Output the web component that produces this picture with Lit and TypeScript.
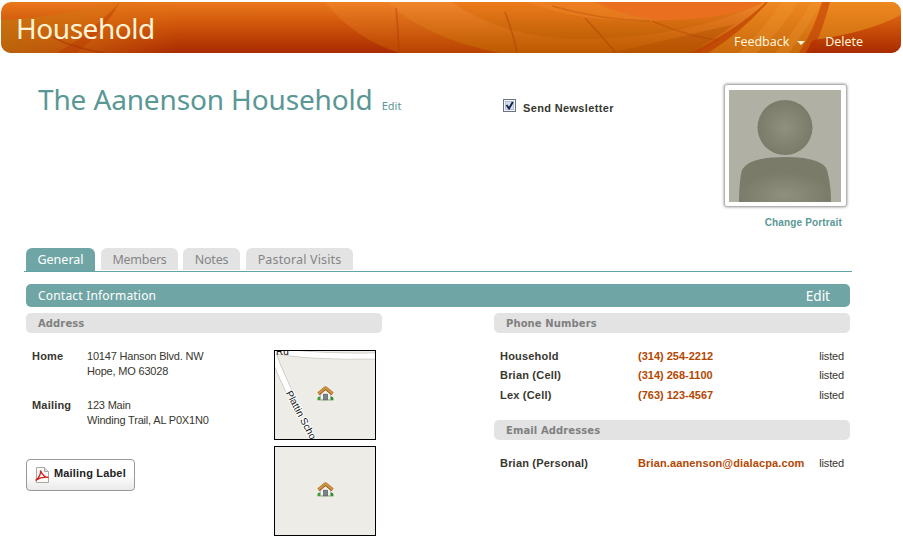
import { LitElement, html, css, svg } from "lit";
import { customElement } from "lit/decorators.js";

const house = svg`<g transform="translate(42,34.500)">
  <path d="M.5 13.300h16v1.500h-16z" fill="#55a044"/>
  <circle cx="2.300" cy="12.800" r="1.700" fill="#3f9b3a"/><circle cx="14.400" cy="12.800" r="1.900" fill="#2f8c34"/>
  <path d="M3.500 7.500 8.500 3.500l5 4v6.800h-10z" fill="#f4f1ea" stroke="#a8a39b" stroke-width=".6"/>
  <rect x="6.600" y="8.700" width="4" height="5.600" fill="#77838a" stroke="#555f66" stroke-width=".7"/>
  <path d="M1.500 8.300 8.500 2.500l7 5.800" fill="none" stroke="#8c5516" stroke-width="3.500" stroke-linejoin="round"/>
  <path d="M1.500 8 8.500 2.200 15.500 8" fill="none" stroke="#cf9440" stroke-width="2.300" stroke-linejoin="round"/>
</g>`;

@customElement("app-root")
export class AppRoot extends LitElement {
  static styles = css`
    :host { display: block; width: 903px; height: 543px; overflow: hidden; background: #fff; color: #37372f; font: 11px/14px "Liberation Sans", Arial, sans-serif; }
    * { box-sizing: border-box; }
    span, a, b, h1, h2, h3 { white-space: nowrap; }
    h1, h2, h3 { margin: 0; font-weight: 400; }
    .banner { position: relative; margin: 2px 2px 0 1px; height: 51px; border-radius: 10px; overflow: hidden; color: #fff3d6; display: flex; justify-content: space-between; font-family: "Noto Sans", sans-serif; }
    .art { position: absolute; left: 0; top: 0; }
    .banner h1 { position: relative; padding-left: 15px; font-size: 28px; line-height: 52px; letter-spacing: -0.45px; }
    .menu { position: relative; display: flex; align-items: center; margin: 30px 38px 0 0; height: 20px; font-size: 12.5px; letter-spacing: -.05px; }
    .arrow { width: 0; height: 0; border: 4px solid transparent; border-top-color: #fff3d6; border-bottom: 0; margin: 1px 20px 0 8px; }
    .top { display: grid; grid-template-columns: 465px 221px 1fr; height: 195px; padding-left: 38px; }
    .title { display: flex; align-items: baseline; color: #5a9795; font-family: "Noto Sans", sans-serif; padding-top: 26px; }
    .title h2 { font-size: 28px; line-height: 40px; letter-spacing: -0.14px; }
    .title a { font-size: 11px; margin-left: 9px; }
    .news { display: flex; padding-top: 46px; font-weight: 700; }
    .box { margin-right: 7px; }
    .news span { padding-top: 2px; letter-spacing: .35px; }
    .frame { width: 121px; height: 121px; margin: 32px 0 0 1px; padding: 5px 5px 4px 4px; background: #fff; border-radius: 2px; box-shadow: 0 0 3px 1px #888; }
    .frame svg { display: block; }
    .change { display: block; width: 118px; text-align: right; color: #5a9795; font-weight: 700; font-size: 10px; margin-top: 10px; letter-spacing: .15px; }
    .tabs { display: flex; margin: 0 51px 0 24px; padding-left: 2px; height: 24px; border-bottom: 1px solid #5fa5a8; font: 12.5px/23px "Noto Sans", sans-serif; color: #858585; }
    .tab { height: 22px; border-radius: 6px 6px 0 0; background: #e3e3e3; text-align: center; }
    .on { height: 23px; background: #6fa5a5; color: #fff; }
    .w0 { width: 69px; margin-right: 6px; } .w1 { width: 77px; margin-right: 5px; letter-spacing: -.25px; } .w2 { width: 57px; margin-right: 6px; letter-spacing: -.2px; } .w3 { width: 107px; letter-spacing: .15px; }
    .bar { display: flex; justify-content: space-between; margin: 12px 53px 6px 26px; padding: 0 20px 0 12px; height: 23px; border-radius: 5px; background: #6fa5a5; color: #fff; font: 12px/23px "Noto Sans", sans-serif; }
    .bar span { letter-spacing: .2px; }
    .bar a { font-size: 13.5px; line-height: 24px; }
    .cols { display: grid; grid-template-columns: 356px 356px; column-gap: 112px; padding-left: 26px; }
    h3 { height: 20px; border-radius: 5px; background: #e3e3e3; color: #808080; font: 700 10px/21px "DejaVu Sans", Verdana, sans-serif; padding-left: 12px; letter-spacing: .1px; }
    .address { display: flex; justify-content: space-between; padding: 17px 6px 0; }
    .places { display: grid; grid-template-columns: 55px auto; grid-template-rows: 49px 61px 32px; margin-top: -1px; }
    .places p { margin: 0; line-height: 14.5px; white-space: nowrap; letter-spacing: -.19px; }
    .places b, .phones b { font-size: 11px; line-height: 14px; letter-spacing: .2px; }
    .btn { grid-column: 1 / 3; display: flex; align-items: center; width: 109px; height: 32px; margin-left: -6px; padding: 0 0 4px 8px; border: 1px solid #999; border-radius: 4px; background: linear-gradient(#fff 50%, #e9e9e9); color: #222; font: 700 11px "Liberation Sans", sans-serif; letter-spacing: .17px; }
    .btn svg { margin: 4px 4px 0 -1px; flex: none; }
    .maps { display: flex; flex-direction: column; gap: 6px; }
    .map { width: 102px; height: 90px; border: 1px solid #000; background: #edece6; }
    .map svg { display: block; }
    .phones { display: grid; grid-template-columns: 138px 1fr auto; padding: 13px 6px 0; grid-auto-rows: 19.5px; align-items: center; }
    .three { height: 87px; }
    .phones a { color: #b34700; font-weight: 700; }
    .phones .mail { letter-spacing: .13px; }
    .phones span { letter-spacing: -.15px; }
  `;

  private row(name: string, value: string) {
    return html`<b>${name}</b><a class=${value.includes("@") ? "mail" : "tel"}>${value}</a><span>listed</span>`;
  }

  render() {
    return html`
      <header class="banner">
        <svg class="art" width="900" height="51" viewBox="1 2 900 51">
          <defs>
            <linearGradient id="a" gradientUnits="userSpaceOnUse" x1="0" y1="2" x2="0" y2="53"><stop stop-color="#ea781c"/><stop offset=".4" stop-color="#d2590b"/><stop offset="1" stop-color="#a82a00"/></linearGradient>
            <linearGradient id="b" gradientUnits="userSpaceOnUse" x1="0" y1="2" x2="0" y2="53"><stop stop-color="#ee8024"/><stop offset="1" stop-color="#b84200"/></linearGradient>
            <linearGradient id="c" gradientUnits="userSpaceOnUse" x1="0" y1="2" x2="0" y2="53"><stop stop-color="#f0852c"/><stop offset="1" stop-color="#bd5900"/></linearGradient>
            <linearGradient id="d" gradientUnits="userSpaceOnUse" x1="0" y1="2" x2="0" y2="42"><stop stop-color="#ec7b1c"/><stop offset="1" stop-color="#bd5e04"/></linearGradient>
            <linearGradient id="e" gradientUnits="userSpaceOnUse" x1="0" y1="2" x2="0" y2="53"><stop stop-color="#ee8820"/><stop offset="1" stop-color="#c96a0c"/></linearGradient>
            <linearGradient id="l"><stop stop-color="#c07a10" stop-opacity=".7"/><stop offset=".45" stop-color="#d47812" stop-opacity=".5"/><stop offset="1" stop-color="#e07010" stop-opacity="0"/></linearGradient>
          </defs>
          <path d="M0 0h903v54H0z" fill="url(#a)"/>
          <path d="M0 20Q60 18 112 2h68v51H0z" fill="url(#l)"/>
          <path d="M53 37Q70 47 105 53" fill="none" stroke="#a83000" stroke-width="1.500" opacity=".5"/>
          <path d="M57 53 82 37Q103 20 120 2Q106 28 77 53z" fill="#b52f00" opacity=".35"/>
          <path d="M325 2Q354 38 399 53H765V2z" fill="url(#b)"/>
          <path d="M388 2Q425 38 500 53H790V2z" fill="url(#c)"/>
          <path d="M451 2Q505 39 583 39Q690 38 765 2z" fill="url(#d)"/>
          <path d="M545 8Q580 20 640 21Q710 20 765 2H525Q535 5 545 8z" fill="#ed8326" opacity=".5"/>
          <path d="M595 2Q630 20 670 20Q725 19 765 2z" fill="#ea701f"/>
          <path d="M610 53Q680 37 735 24L692 53z" fill="#a94800" opacity=".35"/>
          <path d="M399 53Q398 27 396 8M517 53Q514 36 505 12M616 53Q600 34 585 18" fill="none" stroke="#a83a00" stroke-width="1.700" opacity=".4"/>
          <path d="M552 6Q600 20 650 21M652 21Q690 38 730 42H820" fill="none" stroke="#a83a00" stroke-width="1.500" opacity=".3"/>
          <path d="M762 2H901V15Q870 32 814 40L806 53H698Q742 28 762 2z" fill="url(#e)"/>
          <path d="M782 2h16Q782 30 756 53h-18Q765 28 782 2zM811 2h11Q806 30 789 53h-14Q798 27 811 2z" fill="#f5a441" opacity=".22"/>
          <path d="M766 2Q739 28 691 53h17Q743 31 768 2z" fill="#b93600" opacity=".6"/>
          <path d="M901 15Q870 32 812 41L806 53h95z" fill="url(#a)"/>
          <path d="M822 2h8Q822 32 812 53H799Q814 30 822 2z" fill="#b93000" opacity=".5"/>
        </svg>
        <h1>Household</h1>
        <nav class="menu"><span>Feedback</span><i class="arrow"></i><span>Delete</span></nav>
      </header>
      <section class="top">
        <div class="title"><h2>The Aanenson Household</h2><a>Edit</a></div>
        <div class="news">
          <svg class="box" width="13" height="13"><rect x=".5" y=".5" width="12" height="12" fill="#f4f5f8" stroke="#6b7385"/><rect x="2.500" y="2.500" width="8" height="8" fill="#d3dcec" stroke="#b5bfd0"/><path d="M3.500 6 6 9.500 9.800 3" fill="none" stroke="#15244f" stroke-width="1.900"/></svg>
          <span>Send Newsletter</span>
        </div>
        <div>
          <div class="frame"><svg width="112" height="112">
            <defs><radialGradient id="h"><stop stop-color="#8f907e"/><stop offset="1" stop-color="#7a7b69"/></radialGradient><radialGradient id="t" cy=".85"><stop stop-color="#8f907e"/><stop offset="1" stop-color="#7a7b69"/></radialGradient></defs>
            <path d="M0 0h112v112H0z" fill="#b0b0a4"/><circle cx="56" cy="37.500" r="27.500" fill="url(#h)"/>
            <path d="M10 112Q10 96 12 84Q14 67 56 67T99 84Q102 96 102 112z" fill="url(#t)"/></svg></div>
          <a class="change">Change Portrait</a>
        </div>
      </section>
      <nav class="tabs">
        <span class="tab on w0">General</span><span class="tab w1">Members</span><span class="tab w2">Notes</span><span class="tab w3">Pastoral Visits</span>
      </nav>
      <div class="bar"><span>Contact Information</span><a>Edit</a></div>
      <div class="cols">
        <section>
          <h3>Address</h3>
          <div class="address">
            <div class="places">
              <b>Home</b><p>10147 Hanson Blvd. NW<br>Hope, MO 63028</p>
              <b>Mailing</b><p>123 Main<br>Winding Trail, AL P0X1N0</p>
              <button class="btn">
                <svg width="16" height="16"><path d="M2.500 .5h8l4 4v11h-12z" fill="#fafafa" stroke="#a4a9a4"/><path d="M10.500 .5v4h4" fill="#ddd" stroke="#a4a9a4"/><path d="M1.500 13.500C4 11.500 7 7.500 6.500 3.500c2 5 4.500 7 8 7-4-.8-8.500.2-13 3z" fill="none" stroke="#d3201d" stroke-width="1.300"/></svg>
                <span>Mailing Label</span>
              </button>
            </div>
            <div class="maps">
              <div class="map"><svg width="100" height="88">
                <path d="M-2 2Q1 13 14 40M-2-1Q30 6 102 5" fill="none" stroke="#c8c6bf" stroke-width="7"/>
                <path d="M-2 2Q1 13 14 40M-2-1Q30 6 102 5" fill="none" stroke="#fff" stroke-width="5.500"/>
                <text x="1" y="4" font-size="10" fill="#111">Rd</text>
                <text transform="translate(10.500,42) rotate(62)" font-size="10" fill="#111" stroke="#fff" stroke-width="2" paint-order="stroke">Plattin School</text>
                ${house}</svg></div>
              <div class="map"><svg width="100" height="88">${house}</svg></div>
            </div>
          </div>
        </section>
        <section>
          <h3>Phone Numbers</h3>
          <div class="phones three">
            ${this.row("Household", "(314) 254-2212")}${this.row("Brian (Cell)", "(314) 268-1100")}${this.row("Lex (Cell)", "(763) 123-4567")}
          </div>
          <h3>Email Addresses</h3>
          <div class="phones">${this.row("Brian (Personal)", "Brian.aanenson@dialacpa.com")}</div>
        </section>
      </div>`;
  }
}
